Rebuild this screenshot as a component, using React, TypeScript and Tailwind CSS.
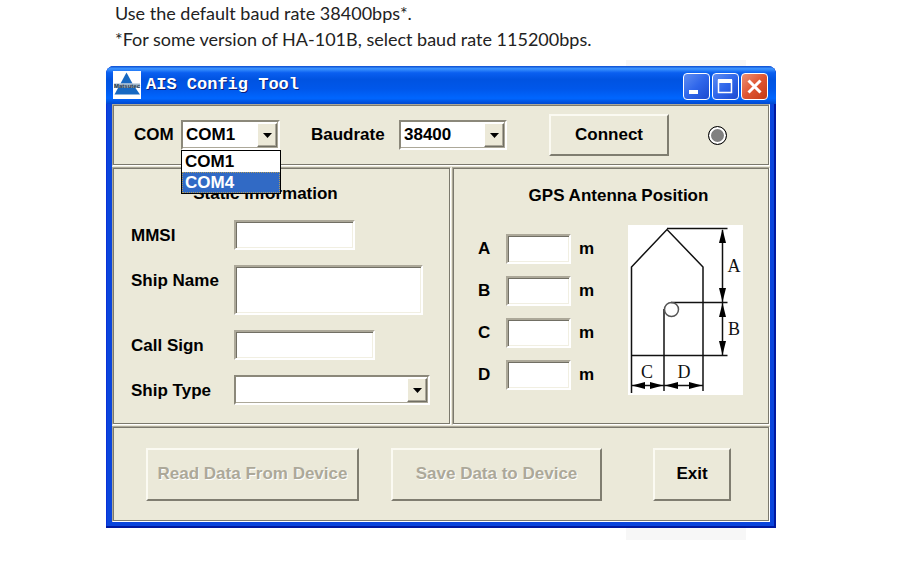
import { useState } from "react";
import type { InputHTMLAttributes, ReactNode, SelectHTMLAttributes } from "react";
import clsx from "clsx";

const ports = ["COM1", "COM4"];
const baudrates = ["38400", "115200"];

const staticFields = [
    { id: "mmsi", label: "MMSI", size: "h-[30px] w-[121px]" },
    { id: "ship-name", label: "Ship Name", size: "h-[50px] w-[189px]" },
    { id: "call-sign", label: "Call Sign", size: "h-[30px] w-[141px]" },
];

const antennaFields = ["A", "B", "C", "D"];

function Panel({ className, children }: { className?: string; children: ReactNode }) {
    return (
        <section
            className={clsx(
                "border border-t-[#aca899] border-l-[#aca899] border-r-white border-b-white shadow-[inset_0_0_0_1px_#7b796d]",
                className
            )}
        >
            {children}
        </section>
    );
}

function TextBox({ className, ...props }: InputHTMLAttributes<HTMLInputElement>) {
    return (
        <input
            type="text"
            className={clsx(
                "block border-2 border-t-[#aca899] border-l-[#aca899] border-r-white border-b-white bg-white px-1 shadow-[inset_1px_1px_0_#716f64,inset_-1px_-1px_0_#f1efe2] outline-none",
                className
            )}
            {...props}
        />
    );
}

function ComboBox({ className, children, ...props }: SelectHTMLAttributes<HTMLSelectElement>) {
    return (
        <div className={clsx("relative h-[30px]", className)}>
            <select
                className="block h-full w-full appearance-none border-2 border-t-[#8b887a] border-l-[#8b887a] border-r-white border-b-white bg-white pl-[3px] leading-[26px] shadow-[inset_-1px_-1px_0_#aca899] outline-none"
                {...props}
            >
                {children}
            </select>
            <span className="pointer-events-none absolute inset-y-[3px] right-[3px] flex w-5 items-center justify-center border border-t-white border-l-white border-r-[#716f64] border-b-[#716f64] bg-[#ece9d8] shadow-[inset_-1px_-1px_0_#aca899]">
                <svg width="9" height="5" viewBox="0 0 9 5" aria-hidden="true">
                    <path d="M0 0h9L4.5 5z" fill="#000" />
                </svg>
            </span>
        </div>
    );
}

function PushButton({ className, disabled, children }: { className?: string; disabled?: boolean; children: ReactNode }) {
    return (
        <button
            type="button"
            disabled={disabled}
            className={clsx(
                "border-2 border-t-[#fbfaf2] border-l-[#fbfaf2] border-r-[#7f7d70] border-b-[#7f7d70] bg-[#ebe9d9] text-center whitespace-nowrap",
                disabled && "text-[#aca899] [text-shadow:1px_1px_0_#fff]",
                className
            )}
        >
            {children}
        </button>
    );
}

function CaptionButton({ label, close, children }: { label: string; close?: boolean; children: ReactNode }) {
    return (
        <button
            type="button"
            aria-label={label}
            className={clsx(
                "h-[27px] w-[27px] rounded border border-white",
                close
                    ? "bg-linear-to-br from-[#e98f74] via-[#df5430] to-[#c23a15]"
                    : "bg-linear-to-br from-[#5f8df2] via-[#2f66ea] to-[#1c4ad0]"
            )}
        >
            <svg viewBox="0 0 25 25" className="h-full w-full" aria-hidden="true">
                {children}
            </svg>
        </button>
    );
}

function AppLogo() {
    return (
        <svg width="28" height="28" viewBox="0 0 28 28" aria-hidden="true">
            <rect width="28" height="28" fill="#fff" />
            <path d="M13.5 1.500L19.500 12.500H7.500z" fill="#1769c2" />
            <path d="M5 17h17.500l4.500 6.500H1.500z" fill="#1769c2" />
            <rect x="1" y="12.500" width="26" height="4.500" fill="#9fb6ca" />
            <text x="14" y="17" textAnchor="middle" fontFamily="Liberation Sans, sans-serif" fontSize="6" fontWeight="700" fill="#26384a">
                Matsutec
            </text>
        </svg>
    );
}

// Bow-up hull outline with the distances A-D measured from the antenna
function AntennaDiagram() {
    return (
        <svg width="115" height="170" viewBox="0 0 115 170" role="img" aria-label="Antenna position on the ship" className="bg-white">
            <g fill="none" stroke="#111" strokeWidth="1.5">
                <path d="M3.5 168V42L39 4.500L75 42V166" />
                <path d="M3.500 130.500H99.500" />
                <path d="M39 3.500H99.500" />
                <path d="M43 77.500H99.500" />
                <path d="M36 84V166" />
                <path d="M94.500 5V130" />
                <path d="M4 160.500H75" />
                <circle cx="43.500" cy="84.500" r="7" stroke="#555" />
            </g>
            <g fill="#000">
                <path d="M94.500 4l3.500 14h-7z" />
                <path d="M94.500 77l3.500-14h-7z" />
                <path d="M94.500 78l3.500 14h-7z" />
                <path d="M94.500 130l3.500-14h-7z" />
                <path d="M4 160.500l13-3.500v7z" />
                <path d="M35 160.500l-13-3.500v7z" />
                <path d="M37 160.500l13-3.500v7z" />
                <path d="M74 160.500l-13-3.500v7z" />
            </g>
            <g fontFamily="Liberation Serif, serif" fontSize="18" fontWeight="400" fill="#111" textAnchor="middle">
                <text x="106" y="47">A</text>
                <text x="106" y="110">B</text>
                <text x="19" y="153">C</text>
                <text x="56" y="153">D</text>
            </g>
        </svg>
    );
}

export default function App() {
    const [port, setPort] = useState("COM1");
    const [highlighted, setHighlighted] = useState("COM4");

    return (
        <main className="min-h-screen min-w-[924px] bg-white pr-[148px] pl-[106px] text-black">
            <div className="pl-[9px] font-['Lato',sans-serif] text-[18px] leading-[26px] text-[#222]">
                <p>Use the default baud rate 38400bps*.</p>
                <p>*For some version of HA-101B, select baud rate 115200bps.</p>
            </div>

            <div className="relative isolate mt-[14px]">
                <div className="absolute right-[30px] -top-1.5 -bottom-3 -z-10 w-[120px] bg-[#f7f7f7]" />

                <div className="rounded-t-lg bg-[#0a45dc] px-[6px] pb-[6px] font-['Liberation_Sans',sans-serif] text-[17px] font-bold shadow-[inset_-2px_-2px_0_#0019a0,inset_1px_0_0_#0831d9]">
                    {/* Title bar */}
                    <header className="-mx-[6px] flex h-[38px] items-center gap-[5px] rounded-t-lg bg-[linear-gradient(to_bottom,#0a4bd0_0%,#3d95ff_7%,#0a5ff0_18%,#0053e1_35%,#0057ea_60%,#0066ff_85%,#0048d0_100%)] pr-2 pl-[7px]">
                        <AppLogo />
                        <h1 className="grow font-['Liberation_Mono',monospace] text-[17px] text-white [text-shadow:1px_1px_0_#0b1f7a]">
                            AIS Config Tool
                        </h1>
                        <div className="flex gap-0.5 pt-0.5">
                            <CaptionButton label="Minimize">
                                <rect x="5" y="16" width="9" height="4" fill="#fff" />
                            </CaptionButton>
                            <CaptionButton label="Maximize">
                                <path d="M5.500 6.500h13v12h-13z" fill="none" stroke="#fff" strokeWidth="1.500" />
                                <rect x="5" y="5" width="14" height="4" fill="#fff" />
                            </CaptionButton>
                            <CaptionButton label="Close" close>
                                <path d="M6.500 6.500l12 12M18.500 6.500l-12 12" stroke="#fff" strokeWidth="3" />
                            </CaptionButton>
                        </div>
                    </header>

                    <div className="flex flex-col gap-px bg-[#ebe9d9]">
                        {/* Connection */}
                        <Panel className="flex h-[62px] items-center pl-[21px]">
                            <label htmlFor="port" className="w-[47px]">COM</label>
                            <div className="relative">
                                <ComboBox
                                    id="port"
                                    value={port}
                                    onChange={(e) => setPort(e.target.value)}
                                    className="w-[99px]"
                                >
                                    {ports.map((p) => (
                                        <option key={p}>{p}</option>
                                    ))}
                                </ComboBox>
                                <ul
                                    role="listbox"
                                    aria-label="COM ports"
                                    className="absolute top-full left-0 z-10 w-[100px] border border-black bg-white leading-[21px]"
                                >
                                    {ports.map((p) => (
                                        <li
                                            key={p}
                                            role="option"
                                            aria-selected={p === highlighted}
                                            onMouseEnter={() => setHighlighted(p)}
                                            onClick={() => setPort(p)}
                                            className={clsx(
                                                "pl-[3px]",
                                                p === highlighted &&
                                                    "bg-[#316ac5] text-white outline-1 -outline-offset-1 outline-dotted outline-[#b09a5a]"
                                            )}
                                        >
                                            {p}
                                        </li>
                                    ))}
                                </ul>
                            </div>
                            <label htmlFor="baudrate" className="ml-[31px] w-[88px]">Baudrate</label>
                            <ComboBox id="baudrate" defaultValue="38400" className="w-[108px]">
                                {baudrates.map((b) => (
                                    <option key={b}>{b}</option>
                                ))}
                            </ComboBox>
                            <PushButton className="ml-[42px] h-[42px] w-[120px]">Connect</PushButton>
                            <span
                                role="status"
                                aria-label="Disconnected"
                                className="ml-[39px] h-[19px] w-[19px] rounded-full border border-black bg-[#808080] shadow-[inset_0_0_0_2px_#fff]"
                            />
                        </Panel>

                        <div className="grid grid-cols-[339fr_318fr] gap-px">
                            {/* Static information */}
                            <Panel className="px-[18px] pt-4 pb-[19px]">
                                <h2 className="pr-8 text-center leading-5">Static Information</h2>
                                <div className="mt-4 grid grid-cols-[103px_1fr] items-start gap-y-[15px] leading-8">
                                    {staticFields.map((field) => (
                                        <div key={field.id} className="contents">
                                            <label htmlFor={field.id} className="h-[30px]">{field.label}</label>
                                            <TextBox id={field.id} className={field.size} />
                                        </div>
                                    ))}
                                    <label htmlFor="ship-type" className="h-[30px]">Ship Type</label>
                                    <ComboBox id="ship-type" className="w-[196px]" />
                                </div>
                            </Panel>

                            {/* GPS antenna */}
                            <Panel className="pt-[18px] pr-[26px] pl-[25px]">
                                <h2 className="pl-4 text-center leading-5">GPS Antenna Position</h2>
                                <div className="mt-[19px] flex items-start justify-between">
                                    <div className="grid grid-cols-[28px_73px_auto] items-center gap-y-3 pt-[9px]">
                                        {antennaFields.map((name) => (
                                            <div key={name} className="contents">
                                                <label htmlFor={`antenna-${name}`}>{name}</label>
                                                <TextBox id={`antenna-${name}`} className="h-[30px] w-[65px]" />
                                                <span>m</span>
                                            </div>
                                        ))}
                                    </div>
                                    <AntennaDiagram />
                                </div>
                            </Panel>
                        </div>

                        {/* Actions */}
                        <Panel className="flex h-[96px] items-center pl-[33px]">
                            <PushButton disabled className="h-[53px] w-[213px]">Read Data From Device</PushButton>
                            <PushButton disabled className="ml-8 h-[53px] w-[211px]">Save Data to Device</PushButton>
                            <PushButton className="ml-[51px] h-[53px] w-[78px]">Exit</PushButton>
                        </Panel>
                    </div>
                </div>
            </div>
        </main>
    );
}
